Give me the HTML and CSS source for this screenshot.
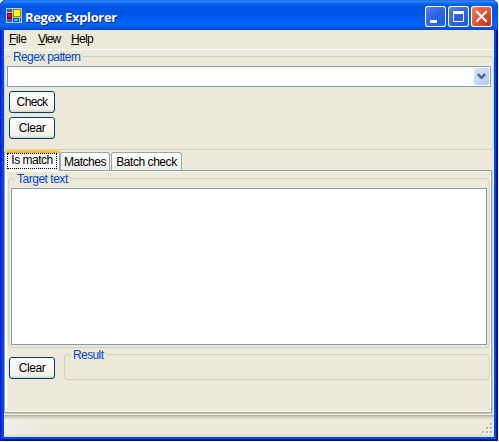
FILE: index.html
```html
<!DOCTYPE html>
<html lang="en">
<head>
<meta charset="utf-8">
<title>Regex Explorer</title>
<link rel="stylesheet" href="styles.css">
</head>
<body>
<div class="window">
  <header class="titlebar">
    <svg class="app-icon" width="16" height="16" viewBox="0 0 16 16" shape-rendering="crispEdges">
      <path fill="#c6c3b8" d="M0 0h16v15H0z"/>
      <path fill="#2a62c8" d="M1 1h5v3H1zM1 11h5v3H1z"/>
      <path fill="#700030" d="M1 5h5v6H1z"/><path fill="#f00030" d="M2 6h3v3H2z"/>
      <path fill="#8c8a00" d="M7 1h8v8H7z"/><path fill="#ffff20" d="M8 2h6v6H8z"/>
      <path fill="#003cc8" d="M7 10h6v4H7z"/><path fill="#00e0ff" d="M8 11h4v2H8z"/><path fill="#2a62c8" d="M14 10h1v4h-1z"/>
    </svg>
    <h1 class="title">Regex Explorer</h1>
    <div class="controls">
      <svg class="control" viewBox="0 0 21 21"><path fill="#fff" d="M5 14h7v3H5z"/></svg>
      <svg class="control" viewBox="0 0 21 21" shape-rendering="crispEdges"><path fill="#fff" fill-rule="evenodd" d="M5 5h11v11H5zM6 8v7h9V8z"/></svg>
      <svg class="control close" viewBox="0 0 21 21"><path fill="none" stroke="#fff" stroke-width="2.2" d="M5.3 5.3l10.4 10.4M15.7 5.3L5.3 15.7"/></svg>
    </div>
  </header>
  <main class="client">
    <nav class="menu">
      <span class="m-file"><u>F</u>ile</span><span class="m-view"><u>V</u>iew</span><span class="m-help"><u>H</u>elp</span>
    </nav>
    <fieldset class="group pattern">
      <legend class="t-pattern">Regex pattern</legend>
      <div class="combo"><span class="drop"><svg width="9" height="7" viewBox="0 0 9 7"><path fill="none" stroke="#4d6185" stroke-width="2.4" d="M.9 1.200l3.600 3.600L8.100 1.200"/></svg></span></div>
      <button class="btn t-check">Check</button>
      <button class="btn">Clear</button>
    </fieldset>
    <div class="tabs">
      <span class="tab active"><span class="focus">Is match</span></span>
      <span class="tab matches">Matches</span>
      <span class="tab batch">Batch check</span>
    </div>
    <section class="page">
      <fieldset class="group target">
        <legend class="t-target">Target text</legend>
        <div class="textarea"></div>
      </fieldset>
      <div class="result-row">
        <button class="btn">Clear</button>
        <fieldset class="group result"><legend class="t-result">Result</legend></fieldset>
      </div>
    </section>
    <footer class="status">
      <svg width="12" height="12" viewBox="0 0 12 12" shape-rendering="crispEdges">
        <path fill="#fff" d="M9 1h2v2H9zM5 5h2v2H5zM9 5h2v2H9zM1 9h2v2H1zM5 9h2v2H5zM9 9h2v2H9z"/>
        <path fill="#b8b4a3" d="M8 0h2v2H8zM4 4h2v2H4zM8 4h2v2H8zM0 8h2v2H0zM4 8h2v2H4zM8 8h2v2H8z"/>
      </svg>
    </footer>
  </main>
</div>
</body>
</html>
```
FILE: styles.css
```css
* { box-sizing: border-box; }
body {
  margin: 0;
  background: #fff;
  overflow: hidden;
  font: 12px/13px "Liberation Sans", sans-serif;
  letter-spacing: -0.45px;
  color: #000;
}
.window {
  width: 498px;
  height: 441px;
  display: flex;
  flex-direction: column;
  background: #0048e8;
  border-radius: 6px 6px 0 0;
  overflow: hidden;
  box-shadow: inset 1px 0 #0019cf, inset 2px 0 #0831d9, inset -1px 0 #00138c, inset -2px 0 #001ea0, inset 0 -1px #00138c, inset 0 -2px #001ea0;
}
.titlebar {
  height: 30px;
  flex: none;
  display: flex;
  align-items: center;
  padding: 2px 6px 0;
  background: linear-gradient(#0a5be0 0, #3a8cff 1px, #0f6cf5 3px, #0058e6 6px, #0054e3 12px, #005cf5 19px, #0066ff 25px, #005bf0 27px, #0045c8 30px);
}
.app-icon { flex: none; margin-top: -1px; }
.title {
  margin: 1px 0 0 3px;
  flex: 1;
  font: bold 13px/18px "Open Sans", sans-serif;
  letter-spacing: -0.35px;
  color: #fff;
  text-shadow: 1px 1px #0a1e80;
}
.controls { display: flex; gap: 2px; }
.control {
  width: 21px;
  height: 21px;
  border-radius: 3px;
  background: radial-gradient(circle at 90% 90%, #1c5fe8 0, #2f62e0 50%, #5d88f0 100%);
  box-shadow: inset 0 0 0 1px #fff;
}
.close { background: radial-gradient(circle at 90% 90%, #c8330c 0, #e0502b 50%, #ee9070 100%); }
.client {
  flex: 1;
  width: 490px;
  margin: 0 4px 4px;
  background: #ece9d8;
  display: flex;
  flex-direction: column;
}
.menu {
  height: 20px;
  flex: none;
  display: flex;
  padding: 2px 0 0 5px;
  border-bottom: 1px solid #fff;
}
.menu span { line-height: 14px; }
.menu u { text-underline-offset: 1px; text-decoration-thickness: 1px; }
.m-file { width: 29px; letter-spacing: -0.5px; }
.m-view { width: 33px; letter-spacing: -0.9px; }
.m-help { letter-spacing: -0.7px; }
.group {
  margin: 0;
  min-width: 0;
  padding: 0;
  border: 1px solid #d0d0bf;
  border-radius: 4px;
}
legend {
  height: 13px;
  line-height: 15px;
  padding: 0 2px;
  margin-left: 6px;
  color: #0046d5;
}
.t-pattern { letter-spacing: -0.62px; }
.t-target { letter-spacing: -0.48px; }
.t-result { letter-spacing: -0.6px; }
.pattern { height: 100px; }
.combo {
  width: 484px;
  height: 21px;
  margin: 3px 0 4px 2px;
  padding: 1px;
  border: 1px solid #7f9db9;
  background: #fff;
  display: flex;
  justify-content: flex-end;
}
.drop {
  width: 15px;
  height: 17px;
  border-radius: 2px;
  background: linear-gradient(135deg, #dce6fe, #b4c8f6);
  display: grid;
  place-items: center;
}
.btn {
  display: block;
  width: 46px;
  height: 22px;
  margin: 0;
  padding: 1px 0 0;
  border: 1px solid #003c74;
  border-radius: 3px;
  background: linear-gradient(#fff, #f2f1eb 85%, #d9d3c6);
  font: inherit;
  letter-spacing: -0.45px;
  color: #000;
}
.t-check { letter-spacing: -0.65px; }
.pattern .btn { margin: 0 0 4px 4px; }
.tabs { display: flex; align-items: flex-end; height: 20px; flex: none; }
.tab {
  height: 18px;
  border: 1px solid #91a7b4;
  border-bottom: 0;
  border-radius: 3px 3px 0 0;
  background: linear-gradient(#fff, #f0f0ea);
  text-align: center;
  line-height: 18px;
}
.active {
  position: relative;
  width: 56px;
  height: 21px;
  margin-bottom: -1px;
  border-top: 2px solid #ffc73c;
  box-shadow: inset 0 1px #fba53c;
  background: #fcfcfa;
  padding: 1px 2px;
}
.focus {
  display: block;
  height: 16px;
  border: 1px dotted #000;
  line-height: 13px;
  letter-spacing: -0.5px;
}
.matches { width: 50px; letter-spacing: -0.5px; }
.batch { width: 71px; margin-left: 1px; letter-spacing: -0.45px; }
.page {
  width: 488px;
  height: 243px;
  flex: none;
  border: 1px solid #919b9c;
  box-shadow: inset 2px 1px #fff, inset -1px -1px #fff, 1px 1px #d0cebf;
  padding: 1px 0 0 3px;
}
.target { width: 482px; height: 176px; }
.textarea {
  width: 476px;
  height: 157px;
  margin: 3px 0 0 2px;
  border: 1px solid #7f9db9;
  background: #fff;
}
.result-row { display: flex; padding-left: 1px; }
.result-row .btn { margin-top: 9px; }
.result { width: 426px; height: 32px; margin-left: 9px; }
.status {
  flex: 1;
  margin-top: 2px;
  display: flex;
  justify-content: flex-end;
  align-items: flex-end;
  padding: 0 0 2px;
  background:
    linear-gradient(#a5a294 0, #c6c3b2 1px, #dedbca 3px, transparent 5px),
    linear-gradient(transparent 18px, #dedac8),
    linear-gradient(90deg, #f0f0ee, #ece9d8 40px);
}
```
